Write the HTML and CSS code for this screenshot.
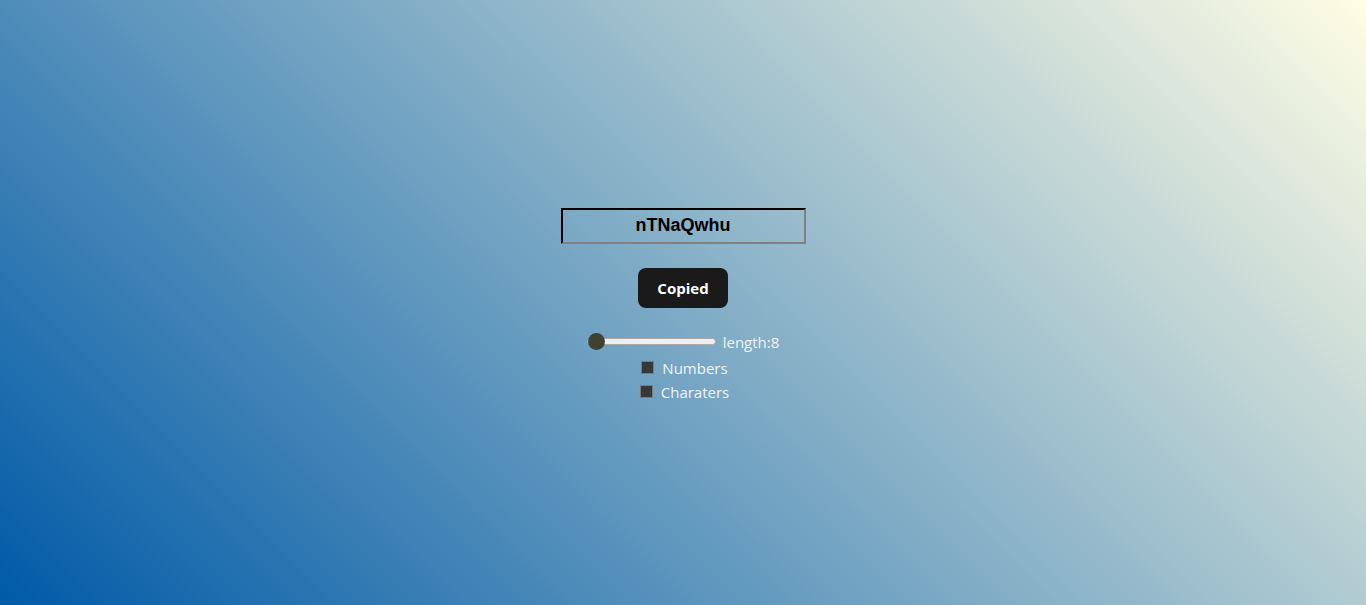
FILE: index.html
```html
<!DOCTYPE html>
<html lang="en">
<head>
<meta charset="utf-8">
<title>Password Generator</title>
<link rel="stylesheet" href="styles.css">
</head>
<body>
<main class="app">
  <input class="output" type="text" value="nTNaQwhu" readonly>
  <button class="copy">Copied</button>
  <div class="controls">
    <div class="range-row">
      <input class="range" type="range" min="8" max="50" value="8">
      <label class="text">length:8</label>
    </div>
    <div class="check-row">
      <input class="check" type="checkbox" id="num">
      <label class="text" for="num">Numbers</label>
    </div>
    <div class="check-row">
      <input class="check" type="checkbox" id="chr">
      <label class="text" for="chr">Charaters</label>
    </div>
  </div>
</main>
</body>
</html>
```
FILE: styles.css
```css
html, body {
  margin: 0;
  height: 100%;
}
body {
  background: linear-gradient(45deg, #005aa7, #fffde4);
  font-family: "Open Sans", "Noto Sans", sans-serif;
}
.app {
  box-sizing: border-box;
  height: 100%;
  padding-top: 6px;
  display: flex;
  flex-direction: column;
  align-items: center;
  justify-content: center;
}
.output {
  box-sizing: border-box;
  width: 245px;
  height: 36px;
  margin: 0;
  padding: 0;
  border: 2px inset;
  border-color: #2e2e2e #808080 #808080 #2e2e2e;
  background: transparent;
  text-align: center;
  font-family: "Liberation Sans", Arial, sans-serif;
  font-weight: bold;
  font-size: 18px;
  color: #000;
  outline: none;
}
.copy {
  margin-top: 24px;
  width: 90px;
  height: 40px;
  border: none;
  border-radius: 8px;
  background: #1a1a1a;
  color: #fff;
  font-family: "Open Sans", "Noto Sans", sans-serif;
  font-weight: 700;
  font-size: 15px;
  padding: 0;
}
.controls {
  margin-top: 25px;
  display: flex;
  flex-direction: column;
  align-items: center;
}
.range-row {
  display: flex;
  align-items: center;
  gap: 7px;
  height: 18px;
  margin-bottom: 5px;
}
.check-row {
  display: flex;
  align-items: center;
  gap: 8px;
  height: 24px;
  margin-left: 3px;
}
.text {
  color: #eef4f8;
  font-size: 15px;
  line-height: 20px;
}
.range {
  -webkit-appearance: none;
  appearance: none;
  width: 129px;
  height: 18px;
  margin: 0;
  background: transparent;
}
.range::-webkit-slider-runnable-track {
  height: 7px;
  background: #efefef;
  border: 1px solid #a8a8a8;
  border-radius: 4px;
  box-sizing: border-box;
}
.range::-webkit-slider-thumb {
  -webkit-appearance: none;
  appearance: none;
  width: 17px;
  height: 17px;
  border-radius: 50%;
  background: #3e4231;
  border: none;
  margin-top: -6px;
}
.check {
  -webkit-appearance: none;
  appearance: none;
  width: 13px;
  height: 13px;
  margin: 0;
  background: #383838;
  border: 1px solid #7a7a7a;
  box-sizing: border-box;
}
```
